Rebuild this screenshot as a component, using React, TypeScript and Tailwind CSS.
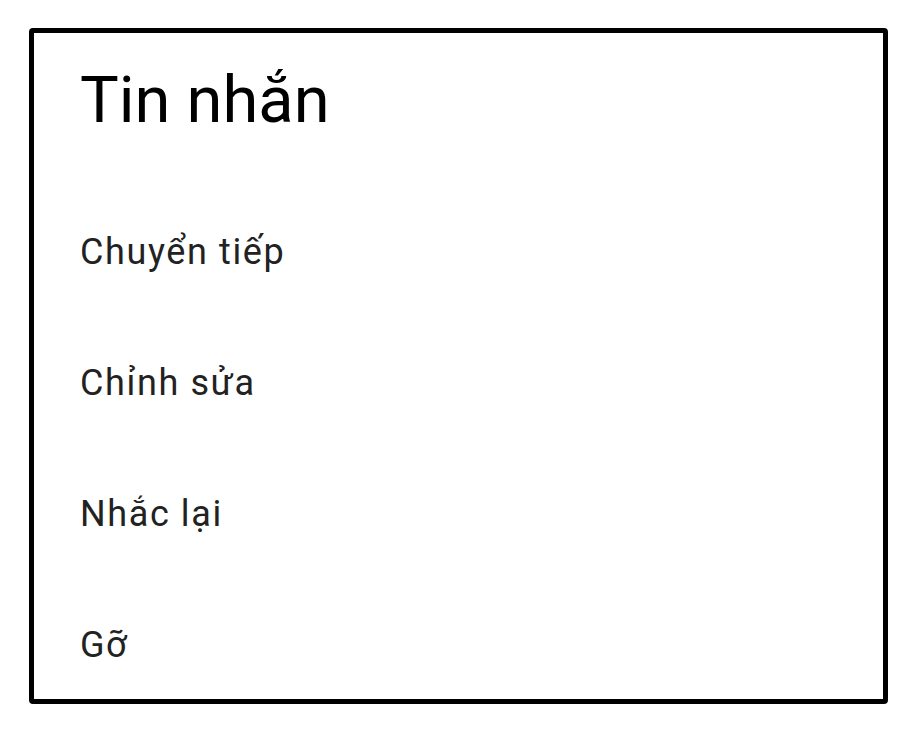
const actions = ["Chuyển tiếp", "Chỉnh sửa", "Nhắc lại", "Gỡ"];

export default function App() {
  return (
    <div className="min-h-screen bg-white pl-[29px] pt-[28px] font-['Roboto',sans-serif]">
      <div className="flex h-[676px] w-[859px] flex-col rounded-[4px] border-[5px] border-black pl-[46px] pt-[34px]">
        <h1 className="text-[65px] leading-[66px] font-normal text-black">Tin nhắn</h1>
        <ul className="mt-[101px] flex flex-col gap-[95px]">
          {actions.map((label) => (
            <li key={label} className="text-[36px] leading-[36px] tracking-[1.6px] text-[#222222]">
              {label}
            </li>
          ))}
        </ul>
      </div>
    </div>
  );
}
